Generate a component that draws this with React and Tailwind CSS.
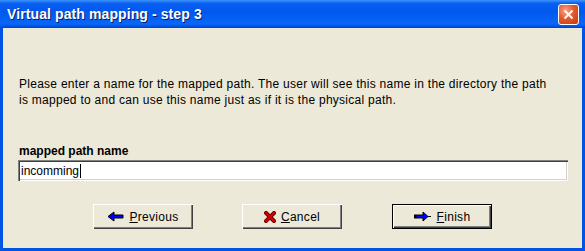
import React from "react";

const btn =
  "flex h-[25px] w-[100px] items-center justify-center gap-[5px] bg-[#ece9d8] text-[12px] tracking-[0.3px] text-black shadow-[inset_1px_1px_0_#ffffff,inset_-1px_-1px_0_#404040,inset_-2px_-2px_0_#808080]";

function ArrowLeft() {
  return (
    <svg width="17" height="11" viewBox="0 0 17 11" className="shrink-0">
      <polygon
        points="1,5.5 7,1 7,4 16,4 16,7 7,7 7,10"
        fill="#0000ff"
        stroke="#000"
        strokeWidth="1"
        strokeLinejoin="miter"
      />
    </svg>
  );
}

function ArrowRight() {
  return (
    <svg width="18" height="11" viewBox="0 0 18 11" className="shrink-0">
      <rect x="0" y="3.5" width="2" height="4" fill="#000" />
      <polygon
        points="2,4 9,4 9,1 14,5.5 9,10 9,7 2,7"
        fill="#0000ff"
        stroke="#000"
        strokeWidth="1"
      />
      <line x1="14" y1="5.5" x2="17" y2="5.5" stroke="#000" strokeWidth="1" />
    </svg>
  );
}

function CrossIcon() {
  return (
    <svg width="12" height="12" viewBox="0 0 12 12" className="shrink-0">
      <path
        d="M2 2 L10 10 M10 2 L2 10"
        stroke="#5a0000"
        strokeWidth="4"
        strokeLinecap="square"
      />
      <path
        d="M2 2 L10 10 M10 2 L2 10"
        stroke="#d40000"
        strokeWidth="2.4"
        strokeLinecap="square"
      />
    </svg>
  );
}

export default function App() {
  return (
    <div
      className="flex h-[251px] w-[585px] flex-col bg-[#0054e3] px-[3px] pb-[3px]"
      style={{ fontFamily: '"Liberation Sans", Arial, sans-serif' }}
    >
      {/* title bar */}
      <div className="-mx-[3px] flex h-[28px] shrink-0 items-center justify-between bg-[linear-gradient(to_bottom,#3d95ff_0%,#0a5ff0_12%,#0058ee_40%,#0866f5_85%,#0058e6_92%,#003dd7_100%)] pl-[7px] pr-[6px]">
        <span className="text-[14px] font-bold tracking-[0.1px] text-white [text-shadow:1px_1px_0_#0a1a6a]">
          Virtual path mapping - step 3
        </span>
        <div className="flex h-[21px] w-[21px] items-center justify-center rounded-[3px] border border-white bg-[radial-gradient(circle_at_35%_30%,#f7a48a_0%,#e35a2e_45%,#c23a0e_100%)]">
          <svg width="11" height="11" viewBox="0 0 11 11">
            <path d="M1.5 1.5 L9.5 9.5 M9.5 1.5 L1.5 9.5" stroke="#fff" strokeWidth="2" />
          </svg>
        </div>
      </div>

      {/* body */}
      <div className="flex flex-1 flex-col bg-[#ece9d8] pl-[15px] pr-[15px]">
        <p className="mt-[48px] pl-[1px] text-[12px] leading-[16px] tracking-[0.27px] text-black">
          Please enter a name for the mapped path. The user will see this name in the directory the path
          <br />
          is mapped to and can use this name just as if it is the physical path.
        </p>

        <label className="mt-[36px] pl-[1px] text-[12px] font-bold leading-[14px] text-black">
          mapped path name
        </label>

        <div className="mt-[2px] flex h-[21px] w-[550px] items-center bg-white pl-[3px] text-[12px] text-black shadow-[inset_1px_1px_0_#808080,inset_2px_2px_0_#404040,inset_-1px_-1px_0_#ffffff,inset_-2px_-2px_0_#d4d0c8]">
          <span>incomming</span>
          <span className="ml-[1px] h-[14px] w-[1px] bg-black" />
        </div>

        <div className="ml-[75px] mt-[23px] flex gap-[49px]">
          <button className={btn}>
            <ArrowLeft />
            <span>
              <span className="underline">P</span>revious
            </span>
          </button>
          <button className={btn}>
            <CrossIcon />
            <span>
              <span className="underline">C</span>ancel
            </span>
          </button>
          <button className={`${btn} ml-[1px] border border-black`}>
            <ArrowRight />
            <span>
              <span className="underline">F</span>inish
            </span>
          </button>
        </div>
      </div>
    </div>
  );
}
